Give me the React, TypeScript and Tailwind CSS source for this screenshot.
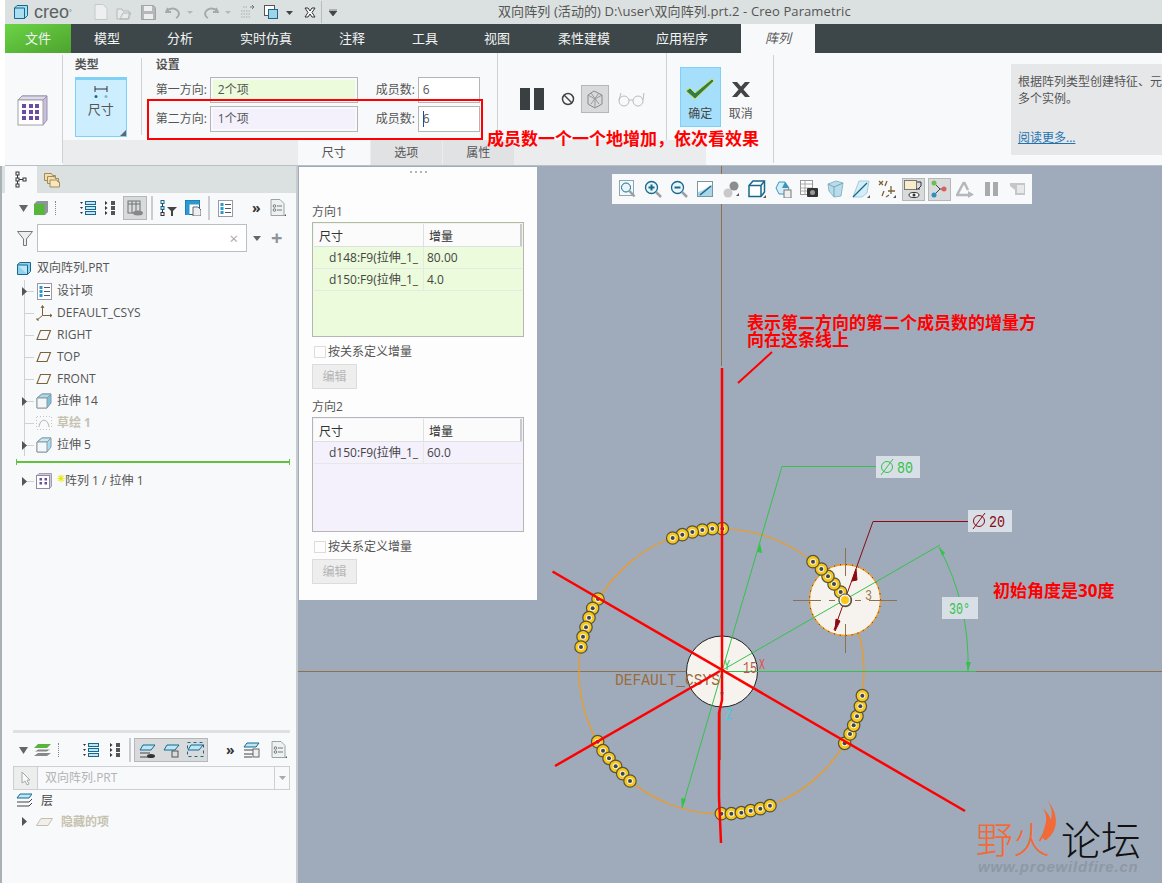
import React from 'react';

const TEAL = '#17688c';
const SKY = '#bde6f7';

const Ico: React.FC<{ w?: number; h?: number; children: React.ReactNode; className?: string }> = ({ w = 16, h = 16, children, className }) => (
  <svg width={w} height={h} viewBox={`0 0 ${w} ${h}`} fill="none" className={`shrink-0 ${className ?? ''}`}>
    {children}
  </svg>
);

const Cube: React.FC<{ front?: string; side?: string; top?: string; stroke?: string }> = ({ front = '#f4f6f7', side = '#7fc0da', top = '#a9d9ec', stroke = '#8a9aa2' }) => (
  <Ico>
    <path d="M6 1h9v9l-4 5H1V5z" fill={side} stroke={stroke} />
    <path d="M1 5h10l4-4H6z" fill={top} stroke={stroke} />
    <path d="M1 5h10v10H1z" fill={front} stroke={stroke} />
  </Ico>
);

const ListRows = () => (
  <Ico w={16} h={16}>
    {[1, 6, 11].map((y) => (
      <g key={y}>
        <rect x="5.5" y={y + 0.5} width="10" height="3" fill={SKY} stroke={TEAL} />
        <path d={`M0 ${y + 1}h3l-1.5 2z`} fill="#333" />
      </g>
    ))}
  </Ico>
);

const SmallSquares = () => (
  <Ico w={10} h={16}>
    {[2, 7, 12].map((y) => (
      <g key={y}>
        <rect x="6" y={y - 1} width="4" height="4" fill="#555" />
        <path d={`M0 ${y - 1}l2.5 2-2.5 2z`} fill="#333" />
      </g>
    ))}
  </Ico>
);

const DocList = () => (
  <Ico w={15} h={17}>
    <rect x="0.5" y="0.5" width="14" height="16" fill="#fff" stroke="#99a" />
    {[3, 7, 11].map((y) => (
      <g key={y}>
        <rect x="2.5" y={y} width="3" height="3" fill="#2b9ad0" />
        <path d={`M7 ${y + 1.5}h6`} stroke="#556" />
      </g>
    ))}
  </Ico>
);

const FormDoc = () => (
  <Ico w={17} h={18}>
    <path d="M1 .5h9l4 4v12H1z" fill="#eef1f3" stroke="#9aa3a8" />
    <circle cx="4.5" cy="7" r="1.3" stroke="#777" />
    <circle cx="4.5" cy="11" r="1.3" stroke="#777" />
    <path d="M7 7h5M7 11h5" stroke="#777" />
    <path d="M16 15v2h-2z" fill="#555" />
  </Ico>
);

const PlaneIco = () => (
  <Ico w={16} h={12}>
    <path d="M4.5 1.5h10l-3.5 9H1z" stroke="#7b6238" strokeWidth="1.1" />
  </Ico>
);

const CsysIco = () => (
  <Ico w={16} h={16}>
    <path d="M6.5 1v9.5H16M6.5 10.5L1 15" stroke="#7b6238" />
    <path d="M5 3l1.5-2.5L8 3M14 9l2 1.5-2 1.5M1 13v2h2" stroke="#7b6238" />
  </Ico>
);

const SketchIco = () => (
  <Ico w={16} h={14}>
    <path d="M1 .5h14M1 13.5h14M.5 1v12M15.5 1v12" stroke="#c8c8c0" strokeDasharray="1 2" />
    <path d="M3 11c1-9 9-9 10 0" stroke="#b5b3a5" />
  </Ico>
);

const PatternIco = () => (
  <Ico w={16} h={16}>
    <path d="M1 2.5L3 .5h12.500v13l-2 2" fill="#cfc8dc" stroke="#a59ab8" />
    <rect x="0.5" y="2.500" width="13" height="13" fill="#fff" stroke="#8d8d9c" />
    {[5, 9].map((y) =>
      [3.5, 8.5].map((x) => <rect key={`${x}${y}`} x={x} y={y} width="2.500" height="2.500" fill="#6a4ea0" />),
    )}
  </Ico>
);

const Arrow = () => (
  <svg width="5" height="9" viewBox="0 0 5 9" className="absolute -left-[3px] top-[7px]">
    <path d="M0 0l5 4.500-5 4.500z" fill="#555" />
  </svg>
);

const treeRows: { icon: React.ReactNode; label: string; caret?: boolean; dim?: boolean }[] = [
  { icon: <DocList />, label: '设计项', caret: true },
  { icon: <CsysIco />, label: 'DEFAULT_CSYS' },
  { icon: <PlaneIco />, label: 'RIGHT' },
  { icon: <PlaneIco />, label: 'TOP' },
  { icon: <PlaneIco />, label: 'FRONT' },
  { icon: <Cube />, label: '拉伸 14', caret: true },
  { icon: <SketchIco />, label: '草绘 1', dim: true },
  { icon: <Cube side="#a5dcf0" top="#c4ebf8" />, label: '拉伸 5', caret: true },
];

const TreeRow: React.FC<{ icon: React.ReactNode; label: React.ReactNode; caret?: boolean; dim?: boolean }> = ({ icon, label, caret, dim }) => (
  <div className="relative flex h-[22px] items-center">
    {caret && <Arrow />}
    <div className="h-px w-[9px] bg-[#cfd2d4]" />
    <div className="ml-[2px] flex w-[16px] justify-center">{icon}</div>
    <span className={`ml-[5px] whitespace-nowrap ${dim ? 'font-bold text-[#c6c2b0]' : 'text-[#555]'}`}>{label}</span>
  </div>
);

const Separator = () => <div className="h-[24px] w-[2px] bg-[#c9cdd0]" />;

const ModelTree = () => (
  <div className="flex flex-col">
    <div className="flex h-[27px] bg-[#dbe0e0]">
      <div className="ml-[3px] flex w-[32px] items-center justify-center bg-[#f8f9fb]">
        <Ico w={12} h={17}>
          <rect x="1" y="1" width="3" height="3" stroke="#333" />
          <rect x="1" y="7" width="3" height="3" stroke="#333" />
          <rect x="1" y="13" width="3" height="3" stroke="#333" />
          <rect x="8" y="7" width="3" height="3" stroke="#333" />
          <path d="M2.500 4v3M2.500 10v3M4 8.500h4" stroke="#333" />
        </Ico>
      </div>
      <div className="ml-[7px] flex items-center">
        <Ico w={16} h={16}>
          <path d="M.5 1.500h7l1 2h3v5h-11z" fill="#f3dfae" stroke="#a5895a" />
          <path d="M3.500 4.500h7l1 2h3v5h-11z" fill="#f3dfae" stroke="#a5895a" />
          <path d="M6 8h7l1 2h1.500v5H6z" fill="#f7e7bd" stroke="#a5895a" />
        </Ico>
      </div>
    </div>
    <div className="mt-[2px] flex h-[26px] items-center pl-[17px]">
      <svg width="9" height="7" viewBox="0 0 9 7">
        <path d="M0 0h9L4.500 7z" fill="#666" />
      </svg>
      <Ico w={14} h={14} className="ml-[6px]">
        <path d="M0 3L3 0h11v11l-3 3H0z" fill="#8e9498" />
        <rect x="0" y="3" width="10.500" height="11" fill="#55b63a" />
      </Ico>
      <div className="ml-[7px] h-[14px] w-px border-l border-dotted border-[#888]" />
      <div className="ml-[24px]">
        <ListRows />
      </div>
      <div className="ml-[9px]">
        <SmallSquares />
      </div>
      <div className="ml-[8px] flex h-[24px] w-[24px] items-center justify-center border border-[#b4b8ba] bg-[#d8dadc]">
        <Ico w={16} h={16}>
          <rect x="1" y="1" width="12" height="12" stroke="#6d7377" />
          <path d="M1 4h12M5 1v12M9 1v12" stroke="#6d7377" />
          <ellipse cx="11" cy="13" rx="5" ry="2.500" fill="#888" />
        </Ico>
      </div>
      <div className="ml-[4px]">
        <Separator />
      </div>
      <Ico w={17} h={16} className="ml-[7px]">
        <rect x="1" y="0.500" width="3" height="3" stroke={TEAL} />
        <rect x="1" y="6.500" width="3" height="3" fill={SKY} stroke={TEAL} />
        <rect x="1" y="12.500" width="3" height="3" stroke="#333" />
        <path d="M2.500 3.500v3M2.500 9.500v3" stroke="#333" />
        <path d="M7 7h10l-4 4v5h-2v-5z" fill="#444" />
      </Ico>
      <Ico w={16} h={16} className="ml-[8px]">
        <rect x="0.500" y="0.500" width="14" height="14" fill="#fff" stroke={TEAL} />
        <rect x="0.500" y="0.500" width="14" height="4" fill="#2b9ad0" />
        <rect x="0.500" y="4" width="4" height="11" fill="#2b9ad0" />
        <path d="M8 7h5l3 3v6H8z" fill="#eee" stroke="#666" />
      </Ico>
      <div className="ml-[7px]">
        <Separator />
      </div>
      <div className="ml-[8px]">
        <DocList />
      </div>
      <span className="ml-[19px] w-[8px] text-[14px] leading-none font-bold text-[#333]">»</span>
      <div className="ml-[10px]">
        <FormDoc />
      </div>
    </div>
    <div className="mt-[3px] flex h-[28px] items-center pl-[15px]">
      <Ico w={16} h={15}>
        <path d="M.5.500h15L9.500 8v6.500h-3V8z" fill="#eee" stroke="#777" />
      </Ico>
      <div className="ml-[4px] flex h-[28px] w-[210px] items-center justify-end border border-[#b9c0c2] bg-white pr-[8px] text-[15px] text-[#a9a9a9]">×</div>
      <svg width="8" height="5" viewBox="0 0 8 5" className="ml-[6px]">
        <path d="M0 0h8L4 5z" fill="#666" />
      </svg>
      <span className="ml-[10px] text-[20px] leading-none font-bold text-[#8e9497]">+</span>
    </div>
    <div className="mt-[4px] flex h-[24px] items-center pl-[15px]">
      <Ico w={14} h={13}>
        <path d="M3 .500h10.500v9l-3 3H.500v-10z" fill="#8ed2ee" stroke={TEAL} />
        <path d="M.500 3h10v9.500" stroke={TEAL} fill={SKY} />
      </Ico>
      <span className="ml-[6px] text-[#555]">双向阵列.PRT</span>
    </div>
    <div className="ml-[22px] flex flex-col border-l border-[#cfd2d4]">
      {treeRows.map((r) => (
        <TreeRow key={r.label} {...r} />
      ))}
    </div>
    <div className="mt-[5px] mr-[6px] ml-[14px] flex h-[2px] items-center justify-between bg-[#62c23f]">
      <div className="h-[6px] w-px bg-[#62c23f]" />
      <div className="h-[6px] w-px bg-[#62c23f]" />
    </div>
    <div className="mt-[7px] ml-[22px] border-l border-transparent">
      <TreeRow
        caret
        icon={<PatternIco />}
        label={
          <span>
            <span className="relative -top-[3px] text-[10px] font-bold text-[#e8e800]">✳</span>阵列 1 / 拉伸 1
          </span>
        }
      />
    </div>
  </div>
);

const LayerTree = () => (
  <div className="mb-[51px] flex flex-col">
    <div className="mr-[6px] ml-[11px] h-[3px] bg-[#dde1e1]" />
    <div className="mt-[3px] flex h-[28px] items-center pl-[17px]">
      <svg width="9" height="7" viewBox="0 0 9 7">
        <path d="M0 0h9L4.500 7z" fill="#666" />
      </svg>
      <Ico w={17} h={15} className="ml-[6px]">
        <path d="M0 13l4-3h13l-4 3z" fill="#888" />
        <path d="M0 9l4-3h13l-4 3z" fill="#888" stroke="#f8f9fb" />
        <path d="M0 5l4-4h13l-4 4z" fill="#55b63a" />
      </Ico>
      <div className="ml-[7px] h-[14px] w-px border-l border-dotted border-[#888]" />
      <div className="ml-[24px]">
        <ListRows />
      </div>
      <div className="ml-[11px]">
        <SmallSquares />
      </div>
      <div className="ml-[9px]">
        <Separator />
      </div>
      <div className="ml-[3px] flex h-[24px] border border-[#b4b8ba] bg-[#d8dadc]">
        {[0, 1, 2].map((i) => (
          <div key={i} className="flex w-[24px] items-center justify-center">
            <Ico w={17} h={17}>
              <path d="M4 3h12l-4 5H1z" fill={SKY} stroke={TEAL} />
              {i === 0 && <path d="M1 11h10M1 15h9" stroke="#444" />}
              {i === 0 && <ellipse cx="12" cy="14" rx="4" ry="2" fill="#333" />}
              {i === 1 && <rect x="9" y="9" width="6" height="6" stroke="#555" />}
              {i === 2 && <rect x="0.500" y="0.500" width="16" height="14" stroke={TEAL} strokeDasharray="3 3" />}
            </Ico>
          </div>
        ))}
      </div>
      <span className="ml-[18px] w-[8px] text-[14px] leading-none font-bold text-[#333]">»</span>
      <Ico w={18} h={18} className="ml-[9px]">
        <path d="M4 2h12l-3 4H1z" fill={SKY} stroke={TEAL} />
        <path d="M1 9h11M1 13h11M1 16h8" stroke="#444" />
        <rect x="10" y="8" width="6" height="8" fill="#eee" stroke="#666" />
      </Ico>
      <div className="ml-[10px]">
        <FormDoc />
      </div>
    </div>
    <div className="mt-[2px] mr-[6px] ml-[11px] flex h-[24px] items-center border border-[#cdd0d2] bg-[#f8f9fb] text-[#b1b3b5]">
      <div className="flex h-full w-[24px] items-center justify-center border-r border-[#cdd0d2] bg-[#eceeee]">
        <Ico w={10} h={15}>
          <path d="M1 1v11l3-2 2 4 2-1-2-4h3z" stroke="#a5a8aa" fill="#f8f9fb" />
        </Ico>
      </div>
      <span className="ml-[7px] flex-1">双向阵列.PRT</span>
      <div className="flex h-full w-[15px] items-center justify-center border-l border-[#cdd0d2]">
        <svg width="7" height="4" viewBox="0 0 7 4">
          <path d="M0 0h7L3.500 4z" fill="#aaa" />
        </svg>
      </div>
    </div>
    <div className="flex h-[21px] items-center pl-[14px]">
      <Ico w={16} h={15}>
        <path d="M4 1h12l-3 4H1z" fill={SKY} stroke={TEAL} />
        <path d="M1 9h12l3-3M1 13h12l3-3" stroke="#444" />
      </Ico>
      <span className="ml-[9px] text-[#444]">层</span>
    </div>
    <div className="flex h-[21px] items-center pl-[20px]">
      <svg width="5" height="9" viewBox="0 0 5 9">
        <path d="M0 0l5 4.500-5 4.500z" fill="#555" />
      </svg>
      <Ico w={17} h={8} className="ml-[9px]">
        <path d="M5 .500h11.500L12 7.500H.500z" fill="#f0efea" stroke="#c2bfb0" />
      </Ico>
      <span className="ml-[8px] font-bold text-[#c6c2b0]">隐藏的项</span>
    </div>
  </div>
);

const RibbonInput: React.FC<{ label: string; value: string; bg: string }> = ({ label, value, bg }) => (
  <div className="flex items-center">
    <span className="w-[54px] text-[#555]">{label}</span>
    <div className="flex h-[26px] w-[148px] items-center border border-[#b5b5b5] p-[2px]">
      <div className={`flex h-full w-full items-center pl-[5px] text-[#555] ${bg}`}>{value}</div>
    </div>
  </div>
);

const CountInput: React.FC<{ cursor?: boolean }> = ({ cursor }) => (
  <div className="ml-[18px] flex items-center">
    <span className="w-[42px] text-[#555]">成员数:</span>
    <div className="flex h-[26px] w-[62px] items-center border border-[#b5b5b5] bg-white pl-[4px] text-[#555]">
      {cursor && <span className="mr-[-1px] h-[16px] w-px bg-[#1a4fa0]" />}
      6
    </div>
  </div>
);

const Ribbon = () => (
  <div className="ml-[5px] flex h-[113px] border-b border-[#b7c0c4] bg-[#f8f9fb] text-[12px]">
    <div className="flex w-[57px] items-center justify-center">
      <div className="mt-[2px] ml-[-1px]">
        <Ico w={31} h={31}>
          <path d="M1 5l4-4h25v24l-4 5" fill="#c7bedb" stroke="#9c93b0" />
          <path d="M1 5l4-4h25l-4 4z" fill="#ded9e8" stroke="#9c93b0" />
          <rect x="1" y="5" width="25" height="25" fill="#fff" stroke="#a0a0a8" />
          {[9, 15, 21].map((y) =>
            [5, 12, 18].map((x) => <rect key={`${x}${y}`} x={x} y={y} width="4" height="4" fill="#6b4ba3" />),
          )}
        </Ico>
      </div>
    </div>
    <div className="my-[2px] w-px self-stretch bg-[#cfd2d4]" />
    <div className="flex w-[712px] flex-col">
      <div className="flex h-[87px]">
        <div className="flex w-[78px] flex-col pl-[12px]">
          <span className="mt-[3px] h-[18px] font-bold text-[#555]">类型</span>
          <div className="relative mt-[3px] flex h-[60px] w-[52px] flex-col items-center border border-t-[3px] border-[#7fd0f5] bg-[#cdeefe] pt-[5px] text-[#555]">
            <Ico w={14} h={14}>
              <path d="M1 1v6M13 1v6M1 4h12" stroke="#333" />
              <circle cx="2" cy="11.500" r="1.500" fill="#17688c" />
              <circle cx="12" cy="11.500" r="1.500" fill="#7db7d0" />
            </Ico>
            <span className="mt-[1px] text-[13px]">尺寸</span>
            <svg width="6" height="6" viewBox="0 0 6 6" className="absolute right-0 bottom-0">
              <path d="M6 0v6H0z" fill="#666" />
            </svg>
          </div>
        </div>
        <div className="my-[5px] w-px bg-[#cfd2d4]" />
        <div className="flex w-[355px] flex-col pl-[14px]">
          <span className="mt-[3px] h-[18px] font-bold text-[#555]">设置</span>
          <div className="mt-[3px] flex">
            <RibbonInput label="第一方向:" value="2个项" bg="bg-[#ebfbdc]" />
            <CountInput />
          </div>
          <div className="mt-[3px] flex">
            <RibbonInput label="第二方向:" value="1个项" bg="bg-[#f4f1fd]" />
            <CountInput cursor />
          </div>
        </div>
        <div className="w-px bg-[#cfd2d4]" />
        <div className="flex w-[168px] items-center pt-[4px] pl-[22px]">
          <div className="flex gap-[4px]">
            <div className="h-[22px] w-[10px] bg-[#3a3f42]" />
            <div className="h-[22px] w-[10px] bg-[#3a3f42]" />
          </div>
          <Ico w={14} h={14} className="ml-[17px]">
            <circle cx="7" cy="7" r="5.500" stroke="#444" strokeWidth="1.500" />
            <path d="M3 3l8 8" stroke="#444" strokeWidth="1.500" />
          </Ico>
          <div className="ml-[6px] flex h-[28px] w-[28px] items-center justify-center border border-[#b4b8ba] bg-[#d8dadc]">
            <Ico w={20} h={20}>
              <path d="M3 6l6-4 8 4v9l-7 4-7-4z" stroke="#888" />
              <path d="M3 6l7 4 7-4M10 10v9M6 4l8 11M14 4L6 15" stroke="#999" />
            </Ico>
          </div>
          <Ico w={27} h={16} className="ml-[9px]">
            <circle cx="6" cy="10" r="5" stroke="#b8bcbf" />
            <circle cx="20" cy="10" r="5" stroke="#b8bcbf" />
            <path d="M11 9h4M1 9l2-7M25 9l1-7" stroke="#b8bcbf" />
          </Ico>
        </div>
        <div className="w-px bg-[#cfd2d4]" />
        <div className="flex pt-[14px] pl-[13px]">
          <div className="flex h-[60px] w-[41px] flex-col items-center border border-[#7fd0f5] bg-[#a5dffb]">
            <Ico w={30} h={22} className="mt-[10px]">
              <path d="M1 13l4-3 5 5L27 1l2 2L10 21z" fill="#2f7d4a" stroke="#d6d94a" />
            </Ico>
            <span className="mt-[5px] text-[#444]">确定</span>
          </div>
          <div className="ml-[7px] flex w-[26px] flex-col items-center">
            <svg width="20" height="15" viewBox="0 0 20 15" className="mt-[15px]">
              <path d="M1 0h5l4 4.500L14 0h5l-6.500 7.500L19 15h-5l-4-4.500L6 15H1l6.500-7.500z" fill="#444" />
            </svg>
            <span className="mt-[8px] text-[#555]">取消</span>
          </div>
        </div>
      </div>
      <div className="flex h-[25px] w-[643px] bg-[#ebecee] pl-[235px] text-[#555]">
        <div className="flex w-[72px] items-center justify-center bg-[#f8f9fb]">尺寸</div>
        <div className="ml-px flex w-[71px] items-center justify-center bg-[#e1e2e4]">选项</div>
        <div className="ml-px flex w-[71px] items-center justify-center bg-[#e1e2e4]">属性</div>
      </div>
    </div>
    <div className="my-[2px] w-px self-stretch bg-[#cfd2d4]" />
    <div className="mt-[11px] ml-[237px] flex h-[91px] flex-1 flex-col bg-[#e6e7e9] pl-[7px] leading-[17px] text-[#555]">
      <span className="mt-[9px] whitespace-nowrap">根据阵列类型创建特征、元</span>
      <span>多个实例。</span>
      <span className="mt-[22px] text-[#1f74b0] underline">阅读更多...</span>
    </div>
  </div>
);

const DirTable: React.FC<{ rows: [string, string][]; bg: string }> = ({ rows, bg }) => (
  <div className={`mt-[2px] flex h-[115px] flex-col border border-[#b5b5b5] ${bg}`}>
    <div className="m-px mb-0 flex h-[23px] border-b border-[#dde0e0] bg-[#fbfbfb] text-[#333]">
      <span className="flex w-[110px] items-center border-r border-[#dde0e0] pt-[3px] pl-[5px]">尺寸</span>
      <span className="flex flex-1 items-center border-r-2 border-[#c9c9c9] pt-[3px] pl-[5px]">增量</span>
    </div>
    {rows.map(([a, b]) => (
      <div key={a} className="mx-px flex h-[22px] border-b border-[#e4e9e6] text-[#444]">
        <span className="flex w-[110px] items-center overflow-hidden border-r border-[#e4e9e6] pl-[15px] whitespace-nowrap">{a}</span>
        <span className="flex items-center pl-[3px]">{b}</span>
      </div>
    ))}
  </div>
);

const DisabledRow = () => (
  <>
    <div className="mt-[8px] flex h-[14px] items-center pl-[2px]">
      <div className="h-[12px] w-[12px] border border-[#dcdcdc] bg-[#fdfdfd]" />
      <span className="ml-[2px] text-[#555]">按关系定义增量</span>
    </div>
    <div className="mt-[5px] flex h-[25px] w-[45px] items-center justify-center border border-[#dcdcdc] bg-[#eeeeee] text-[#b5b5b5]">编辑</div>
  </>
);

const DashPanel = () => (
  <div className="absolute top-[1px] left-[1px] z-10 flex h-[433px] w-[238px] flex-col bg-[#fdfdfd] px-[13px] text-[12px]">
    <div className="mt-[4px] flex justify-center gap-[3px]">
      {[0, 1, 2, 3].map((i) => (
        <div key={i} className="h-[2px] w-[2px] bg-[#b5b5b5]" />
      ))}
    </div>
    <span className="mt-[30px] h-[17px] leading-[17px] text-[#555]">方向1</span>
    <DirTable bg="bg-[#ebfbdc]" rows={[['d148:F9(拉伸_1_', '80.00'], ['d150:F9(拉伸_1_', '4.0']]} />
    <DisabledRow />
    <span className="mt-[9px] h-[17px] leading-[17px] text-[#555]">方向2</span>
    <DirTable bg="bg-[#f4f1fd]" rows={[['d150:F9(拉伸_1_', '60.0']]} />
    <DisabledRow />
  </div>
);

const Mag: React.FC<{ sign?: '+' | '-' }> = ({ sign }) => (
  <Ico w={18} h={18}>
    <circle cx="7.500" cy="7.500" r="6" fill="#e8f5fb" stroke={TEAL} strokeWidth="1.300" />
    {sign && <path d="M4.500 7.500h6" stroke={TEAL} strokeWidth="2" />}
    {sign === '+' && <path d="M7.500 4.500v6" stroke={TEAL} strokeWidth="2" />}
    <path d="M12 12l5 5" stroke="#9aa0a4" strokeWidth="2.500" />
  </Ico>
);

const viewIcons: { node: React.ReactNode; on?: boolean }[] = [
  {
    node: (
      <Ico w={17} h={18}>
        <rect x="0.500" y="0.500" width="14" height="15" fill="#f2f8fb" stroke="#8fa5b0" />
        <circle cx="7" cy="7.500" r="4.500" fill="#e8f5fb" stroke={TEAL} />
        <path d="M10.500 11l5 5.500" stroke="#9aa0a4" strokeWidth="2.500" />
      </Ico>
    ),
  },
  { node: <Mag sign="+" /> },
  { node: <Mag sign="-" /> },
  {
    node: (
      <Ico w={16} h={16}>
        <rect x="0.500" y="0.500" width="15" height="15" fill="#a9d6e8" stroke="#7c95a2" />
        <path d="M1 1h14v3C10 6 6 10 1 11z" fill="#fff" />
        <path d="M3 14L14 5" stroke={TEAL} strokeWidth="1.500" />
      </Ico>
    ),
  },
  {
    node: (
      <Ico w={17} h={17}>
        <circle cx="5" cy="12" r="4.500" fill="#c9c9c9" />
        <circle cx="11" cy="5" r="4.500" fill="#8d8d8d" />
        <path d="M13 15h3v-3z" fill="#555" />
      </Ico>
    ),
  },
  {
    node: (
      <Ico w={18} h={18}>
        <path d="M1 5.500L5 1h11.500v11L13 16.500H1z" fill="#fff" stroke={TEAL} strokeWidth="1.500" />
        <path d="M1 5.500h12v11M13 5.500L16.500 1" stroke={TEAL} strokeWidth="1.500" />
        <path d="M18 15v3h-3z" fill="#555" />
      </Ico>
    ),
  },
  {
    node: (
      <Ico w={17} h={18}>
        <path d="M1 8l3-6h6l4 6-3 6H4z" fill="#d2eef9" stroke="#3f95b8" />
        <path d="M7 8l3-6 4 6z" fill="#3f95b8" />
        <rect x="9" y="10" width="7" height="8" fill="#eee" stroke="#777" />
      </Ico>
    ),
  },
  {
    node: (
      <Ico w={18} h={18}>
        <rect x="0.500" y="0.500" width="12" height="14" fill="#fff" stroke="#999" />
        <path d="M1 4h11M1 8h11M1 11h11M5 1v13" stroke="#aaa" />
        <rect x="7" y="8" width="11" height="9" rx="1" fill="#333" />
        <circle cx="12.500" cy="12.500" r="2.500" fill="#999" />
      </Ico>
    ),
  },
  {
    node: (
      <Ico w={17} h={18}>
        <path d="M1 4l8-3 7 2-2 13-7 1-5-6z" fill="#b8dcea" stroke="#8bb8ca" />
        <path d="M1 4l6 3 9-4M7 7v10" stroke="#6ea8bf" />
      </Ico>
    ),
  },
  {
    node: (
      <Ico w={18} h={18}>
        <path d="M1 17L7 1h10L15 13l-5 4z" fill="#d4eef8" stroke="#a7ccdb" />
        <path d="M1 17L15 3" stroke={TEAL} strokeWidth="1.300" />
        <path d="M18 15v3h-3z" fill="#555" />
      </Ico>
    ),
  },
  {
    node: (
      <Ico w={18} h={18}>
        <path d="M1 1l4 4M5 1L1 5M9 1L7 6M4 16l2-5M13 6v8M10 11h7M11 15l-3 2" stroke="#7b6238" strokeWidth="1.300" />
        <path d="M18 15v3h-3z" fill="#555" />
      </Ico>
    ),
  },
  {
    on: true,
    node: (
      <Ico w={18} h={18}>
        <rect x="0.500" y="0.500" width="12" height="9" fill="#f9eccb" stroke="#777" />
        <path d="M13 2h4v4l-3 3M12 9h4" stroke="#333" />
        <ellipse cx="10" cy="15" rx="5" ry="2.500" fill="#fff" stroke="#333" />
        <circle cx="10" cy="15" r="1.500" fill="#333" />
      </Ico>
    ),
  },
  {
    on: true,
    node: (
      <Ico w={18} h={18}>
        <path d="M4 3l6 6-6 6M10 9h4" stroke="#444" />
        <circle cx="4" cy="3" r="2.500" fill="#6cc04a" />
        <circle cx="14" cy="9" r="2.500" fill="#d9605f" />
        <circle cx="4" cy="15" r="2.500" fill="#2f8fc0" />
      </Ico>
    ),
  },
  {
    node: (
      <Ico w={18} h={18}>
        <path d="M8 2L1 15h12" stroke="#b5b8ba" strokeWidth="2.500" />
        <path d="M8 2l4 8" stroke="#b5b8ba" strokeWidth="2.500" />
        <path d="M12 11l6 3.500-6 3.500z" fill="#b5b8ba" />
      </Ico>
    ),
  },
  {
    node: (
      <div className="flex gap-[3px]">
        <div className="h-[14px] w-[5px] bg-[#a8abad]" />
        <div className="h-[14px] w-[5px] bg-[#a8abad]" />
      </div>
    ),
  },
  {
    node: (
      <Ico w={17} h={14}>
        <path d="M1 1h15v12H6V8L1 4z" fill="#c4c7c9" />
        <path d="M8 3h7v8H8z" fill="#e7e8e9" />
      </Ico>
    ),
  },
];

const ViewBar = () => (
  <div className="absolute top-[8px] left-[314px] z-10 flex h-[30px] w-[420px] items-center bg-[#f8f9fb] pl-[2px]">
    {viewIcons.map((v, i) => (
      <div key={i} className="flex h-[26px] w-[26px] items-center justify-center">
        {v.on ? <div className="flex h-[23px] w-[23px] items-center justify-center border border-[#b4b8ba] bg-[#d8dadc]">{v.node}</div> : v.node}
      </div>
    ))}
  </div>
);

// pattern dots read off the zoomed crop: page x = 540 + zx / 3, page y = 500 + zy / 3
const dotGroups: [number, number][][] = [
  [[547, 86], [517, 86], [487, 90], [457, 96], [427, 104], [398, 114]],
  [[916, 301], [902, 276], [882, 252], [864, 229], [844, 207], [819, 185]],
  [[914, 730], [930, 702], [941, 676], [951, 649], [961, 619], [967, 587]],
  [[544, 941], [574, 941], [604, 938], [632, 932], [661, 926], [690, 917]],
  [[173, 725], [189, 752], [207, 775], [227, 799], [248, 821], [270, 843]],
  [[174, 297], [158, 325], [147, 353], [138, 382], [129, 410], [123, 441]],
];

const Dot: React.FC<{ x: number; y: number }> = ({ x, y }) => (
  <g>
    <circle cx={x} cy={y} r="6.200" fill="#f7c815" stroke="#55523f" strokeWidth="1.200" />
    <circle cx={x} cy={y} r="3" fill="#f4f3ec" />
    <circle cx={x} cy={y} r="2" fill="#444" />
  </g>
);

const Phi: React.FC<{ x: number; y: number; color: string }> = ({ x, y, color }) => (
  <g stroke={color} fill="none">
    <circle cx={x} cy={y} r="5.500" />
    <path d={`M${x - 6} ${y + 8}L${x + 6} ${y - 8}`} />
  </g>
);

const CadText: React.FC<{ x: number; y: number; len: number; size?: number; fill: string; children: React.ReactNode }> = ({ x, y, len, size = 17, fill, children }) => (
  <text x={x} y={y} fontSize={size} fill={fill} textLength={len} lengthAdjust="spacingAndGlyphs">
    {children}
  </text>
);

const Drawing = () => (
  <svg viewBox="298 166 864 717" className="absolute inset-0 h-full w-full" fontFamily="'Liberation Mono', monospace">
    <path d="M298 671.500h864" stroke="#8f6f4c" />
    <path d="M721.500 166v200M720.500 700v60" stroke="#8f6f4c" />

    <circle cx="721.500" cy="671.500" r="142.500" fill="none" stroke="#f39a1a" strokeWidth="1.200" />
    <circle cx="722" cy="671.500" r="35.500" fill="#f6f3ee" stroke="#222" />
    <circle cx="845" cy="600" r="35.500" fill="#f6f3ee" stroke="#f39a1a" strokeWidth="1.300" />
    <circle cx="845" cy="600" r="35.500" fill="none" stroke="#222" strokeDasharray="1 5" />
    <path d="M793 600.500h28M829 600.500h6M855 600.500h6M869 600.500h28M845.500 548v28M845.500 624v29" stroke="#8f6f4c" />
    <CadText x={865} y={600} len={7} size={15} fill="#a07a4f">3</CadText>

    <path d="M876 466.500H782L682 808M720 671.500L940 545M720 671.500H976" fill="none" stroke="#35c24b" />
    <path d="M939 547A248 248 0 0 1 968 671" fill="none" stroke="#35c24b" />
    <path d="M760 543l-3 9 5 1zM682 808l-1-10 5 1zM939 547l3 9 3-3zM968 671l-2-9h5z" fill="#35c24b" />

    <path d="M968 521.500H873L834 630" fill="none" stroke="#8a0a10" />
    <path d="M856 569l-4 12 5-1zM835 631l1-12 4 2z" fill="#8a0a10" stroke="#8a0a10" />

    <path d="M722 672v28" stroke="#27d6e6" strokeWidth="1.500" />
    <path d="M722 700l-2-8h4z" fill="#27d6e6" />
    <CadText x={743} y={673} len={14} fill="#b05a45">15</CadText>
    <CadText x={759} y={669} len={6} size={15} fill="#e8484c">X</CadText>
    <CadText x={724} y={670} len={6} size={15} fill="#35c24b">Y</CadText>
    <CadText x={726} y={719} len={6} size={15} fill="#27d6e6">Z</CadText>
    <CadText x={615} y={685} len={105} fill="#9a6b3d">DEFAULT_CSYS</CadText>

    <rect x="876" y="456" width="44" height="22" fill="#d9dfe7" />
    <Phi x={887} y={467} color="#35c24b" />
    <CadText x={897} y={473} len={16} fill="#35c24b">80</CadText>
    <rect x="968" y="510" width="44" height="22" fill="#d9dfe7" />
    <Phi x={979} y={521} color="#8a0a10" />
    <CadText x={989} y={527} len={16} fill="#8a0a10">20</CadText>
    <rect x="942" y="597" width="36" height="22" fill="#d9dfe7" />
    <CadText x={949} y={614} len={21} fill="#35c24b">30°</CadText>

    {dotGroups.flat().map(([zx, zy]) => (
      <Dot key={`${zx}-${zy}`} x={540 + zx / 3} y={500 + zy / 3} />
    ))}
    <circle cx="845" cy="600" r="6" fill="#f6f3ee" stroke="#555" />
    <circle cx="845" cy="600" r="4" fill="#f7c815" />

    <g stroke="#ff0000" fill="none" strokeWidth="2.500">
      <path d="M722 368V700L719 713V797L721 843" />
      <path d="M552.500 571.500L965 811" />
      <path d="M555 766L720 671" />
      <path d="M738 383L772 352" strokeWidth="2" />
    </g>

    <path d="M1047 800C1058 812 1060 830 1046 840C1040 840 1044 830 1046 822C1047 815 1044 808 1041 807C1046 810 1050 816 1051 820C1053 812 1051 805 1047 800Z" fill="#f26a35" />
  </svg>
);

export default function App() {
  return (
    <div className="relative flex h-[883px] w-[1162px] flex-col overflow-hidden bg-white font-['Open_Sans','Noto_Sans_CJK_SC',sans-serif]">
      {/* title bar */}
      <div className="ml-[5px] flex h-[24px] items-center bg-[#dbe0e0] text-[#555]">
        <Ico w={14} h={14} className="ml-[9px]">
          <path d="M3 .500h10.500v10l-3 3H.500V3z" fill="#a9dff3" stroke={TEAL} />
          <path d="M.500 3h10v10.500" stroke={TEAL} />
        </Ico>
        <span className="ml-[6px] w-[60px] font-['Liberation_Sans',sans-serif] text-[18px] leading-none text-[#5c6064]">creo<sup className="text-[7px]">°</sup></span>
        <Ico w={14} h={16}>
          <path d="M1 .5h8l4 4v11H1z" fill="#eef0f0" stroke="#c6c9ca" />
        </Ico>
        <Ico w={16} h={15} className="ml-[8px]">
          <path d="M1 14V4h5l1 2h6v8zM4 14l3-6h8l-3 6z" fill="#e8eaea" stroke="#b4b8ba" />
        </Ico>
        <Ico w={15} h={15} className="ml-[9px]">
          <path d="M.500.500h12l2 2v12H.500z" fill="#b4b8ba" stroke="#a0a4a6" />
          <rect x="3" y="1" width="8" height="5" fill="#eee" />
          <rect x="3" y="9" width="9" height="5" fill="#eee" />
        </Ico>
        <Ico w={30} h={14} className="ml-[9px]">
          <path d="M3 3l-2 4h5M2 6c4-4 10-3 12 2 0 2-1 4-3 5" stroke="#a5a9ab" strokeWidth="1.800" />
          <path d="M22 6h6l-3 3z" fill="#b4b8ba" />
        </Ico>
        <Ico w={30} h={14} className="ml-[8px]">
          <path d="M13 3l2 4h-5M14 6C10 2 4 3 2 8c0 2 1 4 3 5" stroke="#a5a9ab" strokeWidth="1.800" />
          <path d="M22 6h6l-3 3z" fill="#b4b8ba" />
        </Ico>
        <Ico w={16} h={16} className="ml-[7px]">
          <path d="M1 7h10M1 10h10M1 13h10M3 3h4" stroke="#b9bdbf" strokeWidth="1.500" strokeDasharray="1.500 1" />
          <path d="M12 1l2 2-2 2M10 3h4" stroke="#6a7d88" />
        </Ico>
        <Ico w={30} h={15} className="ml-[8px]">
          <rect x="0.500" y="0.500" width="10" height="10" fill="#fff" stroke="#555" />
          <rect x="4.500" y="4.500" width="9" height="9" fill="#9fd3ea" stroke={TEAL} />
          <path d="M22 6h7l-3.500 4z" fill="#444" />
        </Ico>
        <Ico w={12} h={11} className="ml-[10px]">
          <path d="M1 1h3l2 3 2-3h3L8 5.500 11 10H8L6 7 4 10H1l3-4.500z" fill="#fff" stroke="#333" />
        </Ico>
        <div className="ml-[5px] h-[22px] w-px bg-[#b9bdbf]" />
        <svg width="8" height="7" viewBox="0 0 8 7" className="ml-[7px]">
          <path d="M0 0h8M0 2h8L4 7z" fill="#444" stroke="#444" strokeWidth=".6" />
        </svg>
        <span className="ml-[161px] text-[13px] tracking-[0.1px] whitespace-nowrap">双向阵列 (活动的) D:\user\双向阵列.prt.2 - Creo Parametric</span>
      </div>

      {/* tabs */}
      <div className="ml-[5px] flex h-[29px] items-center bg-[#3d4648] text-[13px] text-[#f2f4f4]">
        <div className="flex h-full w-[66px] items-center justify-center bg-gradient-to-br from-[#6bd446] to-[#4da32e]">文件</div>
        <span className="ml-[23px]">模型</span>
        <span className="ml-[47px]">分析</span>
        <span className="ml-[47px]">实时仿真</span>
        <span className="ml-[47px]">注释</span>
        <span className="ml-[47px]">工具</span>
        <span className="ml-[46px]">视图</span>
        <span className="ml-[48px]">柔性建模</span>
        <span className="ml-[46px]">应用程序</span>
        <div className="ml-[33px] flex h-full w-[74px] items-center justify-center bg-[#f8f9fb] text-[#555] italic">阵列</div>
      </div>

      <Ribbon />

      <div className="flex flex-1 text-[12px]">
        <div className="flex w-[298px] flex-col justify-between border-r-[2px] border-l-[2px] border-r-[#c6ccd0] border-l-[#a9b1b5] bg-[#f8f9fb]">
          <ModelTree />
          <LayerTree />
        </div>
        <div className="relative flex-1 bg-[#9fabba]">
          <Drawing />
          <DashPanel />
          <ViewBar />
          <p className="absolute top-[148px] left-[449px] z-20 w-[300px] text-[17px] leading-[17px] font-bold text-[#ff0000]">
            表示第二方向的第二个成员数的增量方<br />向在这条线上
          </p>
          <p className="absolute top-[415px] left-[695px] z-20 text-[17px] leading-[20px] font-bold whitespace-nowrap text-[#ff0000]">初始角度是30度</p>
          <div className="absolute top-[652px] left-[678px] flex items-center font-['Noto_Sans_CJK_SC',sans-serif] leading-none font-light">
            <span className="text-[37px] text-[#f26a35]">野火</span>
            <span className="ml-[11px] text-[40px] text-[#111]">论坛</span>
          </div>
          <span className="absolute top-[693px] left-[680px] font-['Liberation_Sans',sans-serif] text-[15px] leading-none font-bold tracking-[0.8px] text-[#8e98a4] italic">www.proewildfire.cn</span>
        </div>
      </div>

      {/* marks drawn over the ribbon */}
      <div className="absolute top-[99px] left-[147px] h-[41px] w-[336px] border-2 border-[#ff0000]" />
      <span className="absolute top-[129px] left-[487px] text-[17px] leading-[20px] font-bold whitespace-nowrap text-[#ff0000]">成员数一个一个地增加，依次看效果</span>
    </div>
  );
}
